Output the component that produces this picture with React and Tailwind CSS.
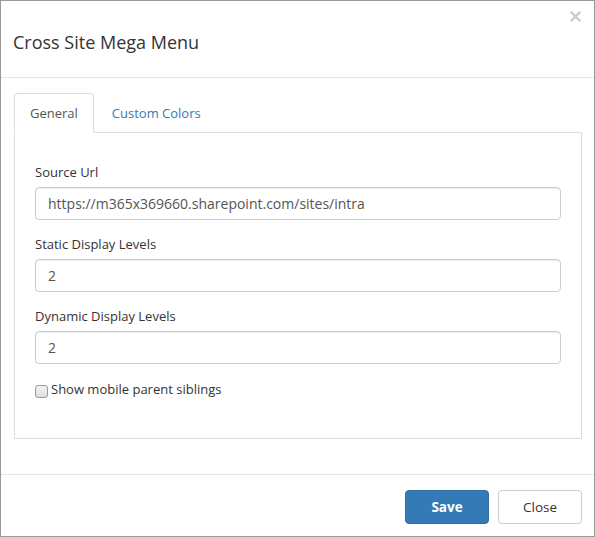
export default function App() {
  const font = { fontFamily: '"Open Sans", "Noto Sans", sans-serif' };
  const fields = [
    { label: "Source Url", value: "https://m365x369660.sharepoint.com/sites/intra" },
    { label: "Static Display Levels", value: "2" },
    { label: "Dynamic Display Levels", value: "2" },
  ];
  return (
    <div style={font} className="relative w-[595px] h-[537px] bg-white border border-[#999] flex flex-col text-[13px] text-[#333]">
      {/* Header */}
      <div className="h-[77px] shrink-0 border-b border-[#e5e5e5] pl-[12px] pt-[29px]">
        <h4 className="text-[18px] leading-[25px] font-normal text-[#333]">Cross Site Mega Menu</h4>
      </div>
      <svg className="absolute left-[569px] top-[10px]" width="11" height="11" viewBox="0 0 11 11">
        <path d="M1.5 1.5 L9.5 9.5 M9.5 1.5 L1.5 9.5" stroke="#c9c9c9" strokeWidth="2.2" strokeLinecap="square" />
      </svg>

      {/* Body */}
      <div className="pt-[15px] pl-[13px] pb-[35px] shrink-0">
        <div className="w-[568px]">
          <ul className="flex border-b border-[#ddd] h-[40px]">
            <li className="-mb-px h-[40px] border border-[#ddd] border-b-white rounded-t-[4px] bg-white px-[15px] pt-[10px] leading-[18px] text-[#555]">
              General
            </li>
            <li className="ml-[2px] h-[39px] border border-transparent px-[15px] pt-[10px] leading-[18px] text-[#337ab7]">
              Custom Colors
            </li>
          </ul>
          <div className="border border-t-0 border-[#ddd] px-[20px] pt-[30px] pb-[40px]">
            {fields.map((f, i) => (
              <div key={i} className="mb-[15px]">
                <div className="leading-[18px] mb-[6px] text-[#333]">{f.label}</div>
                <div className="h-[33px] border border-[#ccc] rounded-[4px] px-[12px] flex items-center text-[14px] text-[#555] shadow-[inset_0_1px_1px_rgba(0,0,0,0.075)]">
                  {f.value}
                </div>
              </div>
            ))}
            <div className="flex items-start h-[19px] pt-[1px] leading-[18px]">
              <span className="mt-[5px] w-[13px] h-[13px] rounded-[3px] border border-[#9a9a9a] bg-gradient-to-b from-[#f4f4f4] to-[#dedede] shrink-0" />
              <span className="ml-[3px] text-[#333]">Show mobile parent siblings</span>
            </div>
          </div>
        </div>
      </div>

      {/* Footer */}
      <div className="border-t border-[#e5e5e5] flex-1 flex justify-end items-start pt-[15px] pr-[12px]">
        <button className="w-[84px] h-[34px] rounded-[4px] bg-[#337ab7] border border-[#2e6da4] text-white font-bold text-[13.5px]">
          Save
        </button>
        <button className="ml-[9px] w-[84px] h-[34px] rounded-[4px] bg-white border border-[#ccc] text-[#333] text-[13.5px]">
          Close
        </button>
      </div>
    </div>
  );
}
